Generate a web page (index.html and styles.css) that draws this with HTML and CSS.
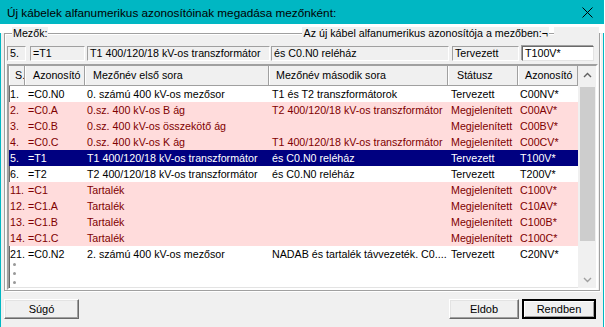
FILE: index.html
```html
<!DOCTYPE html>
<html lang="hu">
<head>
  <meta charset="UTF-8" />
  <title>Új kábelek alfanumerikus azonosítóinak megadása</title>
  <link rel="stylesheet" href="styles.css">
</head>
<body>
  <div class="window">
    <div class="titlebar">
      <span class="title">Új kábelek alfanumerikus azonosítóinak megadása mezőnként:</span>
      <svg class="close" width="11" height="11" viewBox="0 0 11 11">
        <path d="M0.5 0.5 L10.5 10.5 M10.5 0.5 L0.5 10.5" stroke="#000" stroke-width="1" fill="none" />
      </svg>
    </div>
    <div class="client">
      <div class="group">
        <div class="legend">
          <span class="legend-label first">Mezők:</span>
          <span class="legend-label second">Az új kábel alfanumerikus azonosítója a mezőben:¬</span>
          <span class="legend-gap"></span>
          <span class="legend-mask"></span>
        </div>

        <div class="fields">
          <div class="field f-num">5.</div>
          <div class="field f-id">=T1</div>
          <div class="field f-name1">T1 400/120/18 kV-os transzformátor</div>
          <div class="field f-name2">és C0.N0 reléház</div>
          <div class="field f-status">Tervezett</div>
          <div class="edit f-edit">T100V*</div>
        </div>

        <div class="list">
          <div class="table">
            <div class="thead">
              <span class="th">S.</span>
              <span class="th">Azonosító</span>
              <span class="th">Mezőnév első sora</span>
              <span class="th">Mezőnév második sora</span>
              <span class="th">Státusz</span>
              <span class="th">Azonosító</span>
            </div>
            <div class="row">
              <span class="cell">1.</span><span class="cell">=C0.N0</span><span class="cell">0. számú 400 kV-os mezősor</span><span class="cell">T1 és T2 transzformátorok</span><span class="cell">Tervezett</span><span class="cell">C00NV*</span>
            </div>
            <div class="row pink">
              <span class="cell">2.</span><span class="cell">=C0.A</span><span class="cell">0.sz. 400 kV-os B ág</span><span class="cell">T2 400/120/18 kV-os transzformátor</span><span class="cell">Megjelenített</span><span class="cell">C00AV*</span>
            </div>
            <div class="row pink">
              <span class="cell">3.</span><span class="cell">=C0.B</span><span class="cell">0.sz. 400 kV-os összekötő ág</span><span class="cell"></span><span class="cell">Megjelenített</span><span class="cell">C00BV*</span>
            </div>
            <div class="row pink">
              <span class="cell">4.</span><span class="cell">=C0.C</span><span class="cell">0.sz. 400 kV-os K ág</span><span class="cell">T1 400/120/18 kV-os transzformátor</span><span class="cell">Megjelenített</span><span class="cell">C00CV*</span>
            </div>
            <div class="row selected">
              <span class="cell">5.</span><span class="cell">=T1</span><span class="cell">T1 400/120/18 kV-os transzformátor</span><span class="cell">és C0.N0 reléház</span><span class="cell">Tervezett</span><span class="cell">T100V*</span>
            </div>
            <div class="row">
              <span class="cell">6.</span><span class="cell">=T2</span><span class="cell">T2 400/120/18 kV-os transzformátor</span><span class="cell">és C0.N0 reléház</span><span class="cell">Tervezett</span><span class="cell">T200V*</span>
            </div>
            <div class="row pink">
              <span class="cell">11.</span><span class="cell">=C1</span><span class="cell">Tartalék</span><span class="cell"></span><span class="cell">Megjelenített</span><span class="cell">C100V*</span>
            </div>
            <div class="row pink">
              <span class="cell">12.</span><span class="cell">=C1.A</span><span class="cell">Tartalék</span><span class="cell"></span><span class="cell">Megjelenített</span><span class="cell">C10AV*</span>
            </div>
            <div class="row pink">
              <span class="cell">13.</span><span class="cell">=C1.B</span><span class="cell">Tartalék</span><span class="cell"></span><span class="cell">Megjelenített</span><span class="cell">C100B*</span>
            </div>
            <div class="row pink">
              <span class="cell">14.</span><span class="cell">=C1.C</span><span class="cell">Tartalék</span><span class="cell"></span><span class="cell">Megjelenített</span><span class="cell">C100C*</span>
            </div>
            <div class="row">
              <span class="cell">21.</span><span class="cell">=C0.N2</span><span class="cell">2. számú 400 kV-os mezősor</span><span class="cell">NADAB és tartalék távvezeték. C0....</span><span class="cell">Tervezett</span><span class="cell">C20NV*</span>
            </div>
            <div class="dots">
              <span class="dot"></span>
              <span class="dot"></span>
              <span class="dot"></span>
            </div>
          </div>

          <div class="scrollbar">
            <div class="sb-btn">
              <svg width="9" height="6" viewBox="0 0 9 6"><path d="M1 5 L4.5 1.5 L8 5" stroke="#606060" stroke-width="1.4" fill="none" /></svg>
            </div>
            <div class="sb-track"><div class="sb-thumb"></div></div>
            <div class="sb-btn">
              <svg width="9" height="6" viewBox="0 0 9 6"><path d="M1 1 L4.5 4.5 L8 1" stroke="#a0a0a0" stroke-width="1.4" fill="none" /></svg>
            </div>
          </div>
        </div>
      </div>

      <div class="buttons">
        <button class="btn btn-help">Súgó</button>
        <button class="btn btn-cancel">Eldob</button>
        <button class="btn btn-ok">Rendben</button>
      </div>
    </div>
  </div>
</body>
</html>
```

FILE: styles.css
```css
* {
  box-sizing: border-box;
}
body {
  margin: 0;
  background: #fff;
  font-family: 'Liberation Sans', Arial, sans-serif;
  font-size: 10.7px;
  color: #000;
}
.window {
  width: 604px;
}
.titlebar {
  height: 24px;
  background: #00b7c3;
  display: flex;
  align-items: center;
  padding: 0 11px 0 7px;
}
.title {
  flex: 1;
  font-size: 11.75px;
  color: #000;
  white-space: nowrap;
}
.close {
  display: block;
}
.client {
  height: 301px;
  background: #f0f0f0;
  border: 1px solid #00b7c3;
  border-top: none;
}

/* group box */
.group {
  margin: 9px 3px 0 3px;
  border: 1px solid #a0a0a0;
  box-shadow: inset 1px 1px 0 #fff, 1px 1px 0 #fff;
  padding: 0 1px 0 2px;
}
.legend {
  display: flex;
  height: 13px;
  line-height: 13px;
  margin-top: -7px;
}
.legend-label {
  background: #f0f0f0;
  padding: 0 1px;
  white-space: nowrap;
}
.legend-label.first {
  margin-left: 5px;
}
.legend-label.second {
  margin-left: auto;
  padding: 0 1px 0 2px;
}
.legend-gap {
  width: 5px;
}
.legend-mask {
  width: 45px;
  margin-right: -1px;
  background: #f0f0f0;
}

/* field row */
.fields {
  display: flex;
  margin-top: 6px;
  height: 15px;
}
.field, .edit {
  height: 15px;
  line-height: 13px;
  padding: 0 2px;
  white-space: nowrap;
  overflow: hidden;
  border: 1px solid;
  border-color: #a0a0a0 #fff #fff #a0a0a0;
}
.edit {
  background: #fff;
  border-color: #696969 #e3e3e3 #e3e3e3 #696969;
  box-shadow: -1px -1px 0 #a0a0a0;
}
.f-num { width: 19px; margin-right: 4px; }
.f-id { width: 55px; margin-right: 2px; }
.f-name1 { width: 183px; margin-right: 1px; }
.f-name2 { width: 178px; margin-right: 3px; }
.f-status { width: 67px; margin-right: 3px; }
.f-edit { width: 72px; }

/* list view */
.list {
  display: flex;
  margin-top: 3px;
  height: 226px;
  border: 2px solid;
  border-color: #a0a0a0 #fff #fff #a0a0a0;
  box-shadow: inset 1px 1px 0 #696969, inset -1px -1px 0 #e3e3e3;
  background: #fff;
}
.table {
  width: 569px;
}
.thead, .row {
  display: grid;
  grid-template-columns: 16px 60px 184px 179px 70px 60px;
}
.thead {
  height: 20px;
  line-height: 19px;
  background: #f0f0f0;
  border-bottom: 1px solid #a0a0a0;
}
.th {
  white-space: nowrap;
  overflow: hidden;
  border-right: 1px solid #a0a0a0;
  box-shadow: inset 1px 0 0 #fff;
}
.th:nth-child(1) { padding-left: 6px; }
.th:nth-child(2) { padding-left: 8px; }
.th:nth-child(3) { padding-left: 8px; }
.th:nth-child(4) { padding-left: 7px; }
.th:nth-child(5) { padding-left: 9px; }
.th:nth-child(6) { padding-left: 7px; }

.row {
  height: 16px;
  line-height: 16px;
}
.row.pink {
  background: #ffdcdc;
  color: #800000;
}
.row.selected {
  background: #000080;
  color: #fff;
}
.cell {
  white-space: nowrap;
  overflow: hidden;
}
.cell:nth-child(1) { padding-left: 1px; }
.cell:nth-child(2) { padding-left: 3px; }
.cell:nth-child(3) { padding-left: 2px; }
.cell:nth-child(4) { padding-left: 3px; }
.cell:nth-child(5) { padding-left: 3px; }
.cell:nth-child(6) { padding-left: 2px; }

.dots {
  display: flex;
  flex-direction: column;
  gap: 6px;
  padding: 1px 0 0 4px;
}
.dot {
  width: 3px;
  height: 3px;
  border-radius: 50%;
  background: #999;
}

/* scrollbar */
.scrollbar {
  width: 18px;
  display: flex;
  flex-direction: column;
  background: #f0f0f0;
}
.sb-btn {
  height: 17px;
  display: flex;
  align-items: center;
  justify-content: center;
}
.sb-track {
  flex: 1;
  padding: 4px 1px 0 2px;
}
.sb-thumb {
  height: 154px;
  background: #cdcdcd;
}

/* buttons */
.buttons {
  display: flex;
  margin-top: 8px;
  padding: 0 7px 0 3px;
}
.btn {
  height: 20px;
  padding: 0;
  font-family: 'Liberation Sans', Arial, sans-serif;
  font-size: 11px;
  color: #000;
  background: #f0f0f0;
  border: 1px solid;
  border-color: #fff #696969 #696969 #fff;
  box-shadow: inset -1px -1px 0 #a0a0a0, inset 1px 1px 0 #e3e3e3;
}
.btn-help { width: 75px; }
.btn-cancel { width: 70px; margin-left: auto; margin-right: 3px; }
.btn-ok {
  width: 74px;
  border: 2px solid #000;
  box-shadow: inset 1px 1px 0 #fff, inset -1px -1px 0 #a0a0a0;
}
```
